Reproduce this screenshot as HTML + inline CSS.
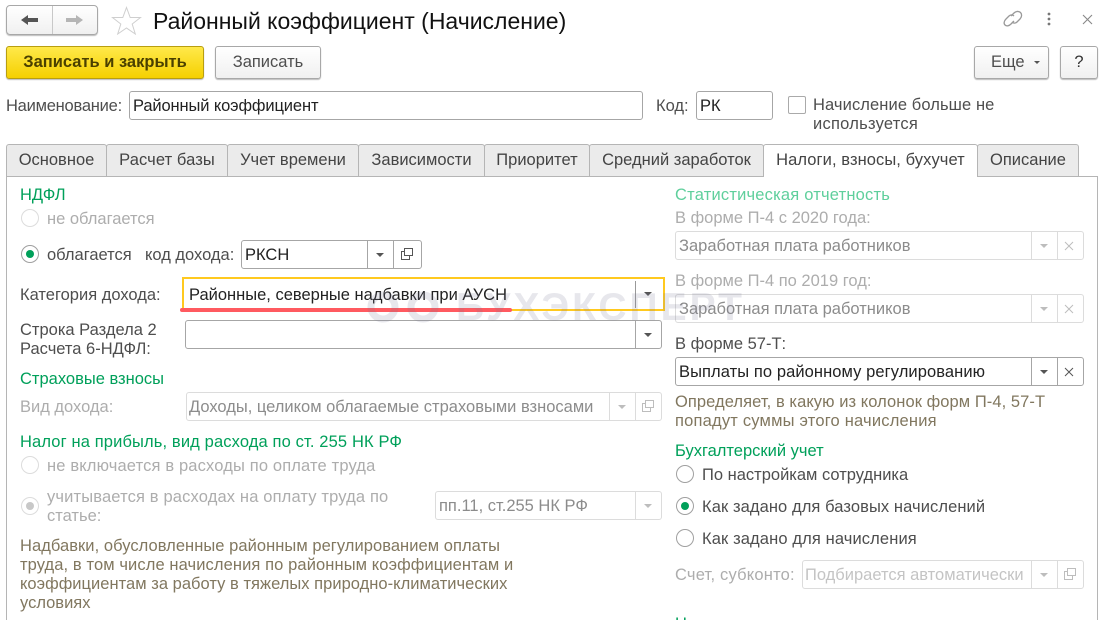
<!DOCTYPE html>
<html><head><meta charset="utf-8"><style>
html,body{margin:0;padding:0;background:#fff}
#p{position:relative;width:1101px;height:620px;overflow:hidden;background:#fff;font-family:"Liberation Sans",sans-serif;font-size:16.5px;color:#4e4e4e}
.t{position:absolute;white-space:nowrap;line-height:20px;margin-top:1px}
.g{color:#00a05a}.lg{color:#5fcf9c}.d{color:#adadad}.k{color:#222}.o{color:#81775f}
.b{position:absolute;box-sizing:border-box;border:1px solid #a8a8a8;border-radius:3px;background:linear-gradient(#fff,#f0f0f0);box-shadow:0 1px 1px #bbb}
.f{position:absolute;box-sizing:border-box;border:1px solid #a6a6a6;border-radius:3px;background:#fff;height:29px}
.f.dis{border-color:#dcdcdc}
.s{position:absolute;top:0;bottom:0;width:1px;background:#a6a6a6}
.dis .s{background:#dcdcdc}
.tr{position:absolute;width:0;height:0;border-left:4px solid transparent;border-right:4px solid transparent;border-top:4px solid #555;top:12px}
.dis .tr{border-top-color:#bdbdbd}
.tab{position:absolute;top:144px;height:32px;box-sizing:border-box;background:#ebebeb;border:1px solid #b5b5b5;border-bottom:none;border-radius:3px 3px 0 0;text-align:center;line-height:30px;color:#444}
.r{position:absolute;width:18px;height:18px;box-sizing:border-box;border:1px solid #a0a0a0;border-radius:50%;background:#fff}
.r.dis{border-color:#dcdcdc}
.r i{position:absolute;left:4px;top:4px;width:8px;height:8px;border-radius:50%;background:#00a05a}
.r.dis i{background:#c8c8c8}
svg{position:absolute}
</style></head><body><div id="p">

<!-- nav -->
<div class="b" style="left:6px;top:5px;width:92px;height:30px;border-radius:4px"></div>
<div style="position:absolute;left:52px;top:6px;width:1px;height:28px;background:#c8c8c8"></div>
<svg style="left:20px;top:13px" width="20" height="14"><path d="M1 7L8 2V5H18V9H8V12Z" fill="#555"/></svg>
<svg style="left:65px;top:13px" width="20" height="14"><path d="M18 7L11 2V5H1V9H11V12Z" fill="#b5b5b5"/></svg>
<svg style="left:111px;top:6px" width="31" height="29"><path d="M15.500 1.500L19.200 11.500H29.500L21.200 18L24.300 28L15.500 22L6.700 28L9.800 18L1.500 11.500H11.800Z" fill="#fff" stroke="#cfcfcf"/></svg>
<div class="t k" style="left:153px;top:7px;font-size:23px;line-height:26px;color:#111">Районный коэффициент (Начисление)</div>

<svg style="left:1002px;top:9px" width="22" height="20" fill="none" stroke="#999" stroke-width="1.300"><path d="M9 7L12 4C14 2 17 2 18.500 3.500C20 5 20 8 18 10L15 13C13.500 14.500 11.500 14.500 10 13"/><path d="M12 12L9 15C7 17 4.500 17.500 3 16C1.500 14.500 2 12 4 10L7 7C8.500 5.500 10.500 5.500 12 7"/></svg>
<svg style="left:1046px;top:11px" width="6" height="16" fill="#777"><circle cx="3" cy="3" r="1.400"/><circle cx="3" cy="8" r="1.400"/><circle cx="3" cy="13" r="1.400"/></svg>
<svg style="left:1082px;top:14px" width="11" height="11" stroke="#888" stroke-width="1.100"><path d="M1 1L10 10M10 1L1 10"/></svg>

<!-- buttons -->
<div class="b" style="left:6px;top:46px;width:198px;height:33px;background:linear-gradient(#ffe94a,#f5d000);border-color:#b89e10;text-align:center;line-height:31px;font-weight:bold;color:#4a4000">Записать и закрыть</div>
<div class="b" style="left:215px;top:46px;width:106px;height:33px;text-align:center;line-height:31px">Записать</div>
<div class="b" style="left:974px;top:46px;width:75px;height:33px;line-height:31px;padding-left:16px">Еще<span style="position:absolute;left:59px;top:14px;width:0;height:0;border-left:3px solid transparent;border-right:3px solid transparent;border-top:3px solid #555"></span></div>
<div class="b" style="left:1060px;top:46px;width:38px;height:33px;text-align:center;line-height:31px;color:#333">?</div>

<!-- name row -->
<div class="t" style="left:6px;top:95px;letter-spacing:-.23px">Наименование:</div>
<div class="f" style="left:129px;top:91px;width:514px"><div class="t k" style="left:3px;top:3px;letter-spacing:-.12px">Районный коэффициент</div></div>
<div class="t" style="left:656px;top:95px">Код:</div>
<div class="f" style="left:696px;top:91px;width:77px"><div class="t k" style="left:3px;top:3px">РК</div></div>
<div style="position:absolute;left:788px;top:96px;width:18px;height:18px;box-sizing:border-box;border:1px solid #aaa;border-radius:2px"></div>
<div class="t" style="left:813px;top:94px;letter-spacing:.1px">Начисление больше не</div>
<div class="t" style="left:813px;top:113px;letter-spacing:.25px">используется</div>

<!-- tabs -->
<div style="position:absolute;left:6px;top:176px;width:1092px;height:460px;box-sizing:border-box;border:1px solid #b5b5b5"></div>
<div class="tab" style="left:6px;width:101px">Основное</div>
<div class="tab" style="left:106px;width:122px;letter-spacing:.1px">Расчет базы</div>
<div class="tab" style="left:227px;width:132px">Учет времени</div>
<div class="tab" style="left:358px;width:127px">Зависимости</div>
<div class="tab" style="left:484px;width:106px">Приоритет</div>
<div class="tab" style="left:589px;width:175px">Средний заработок</div>
<div class="tab" style="left:763px;width:215px;height:33px;background:#fff;letter-spacing:.08px">Налоги, взносы, бухучет</div>
<div class="tab" style="left:977px;width:102px">Описание</div>

<!-- left column -->
<div class="t g" style="left:20px;top:184px">НДФЛ</div>
<div class="r dis" style="left:21px;top:209px"></div>
<div class="t d" style="left:47px;top:208px">не облагается</div>
<div class="r" style="left:21px;top:245px"><i></i></div>
<div class="t" style="left:47px;top:244px">облагается</div>
<div class="t" style="left:145px;top:244px">код дохода:</div>
<div class="f" style="left:241px;top:240px;width:181px"><div class="t k" style="left:3px;top:3px">РКСН</div><div class="s" style="left:125px"></div><div class="tr" style="left:134px"></div><div class="s" style="left:151px"></div>
<svg style="left:158px;top:6px" width="14" height="14" fill="none" stroke="#555"><path d="M4.500 1.500H12.500V8.500H4.500ZM4.500 4.500H1.500V12.500H9.500V8.500"/></svg></div>

<div class="t" style="left:20px;top:284px">Категория дохода:</div>
<div style="position:absolute;left:182px;top:277px;width:483px;height:34px;box-sizing:border-box;border:2px solid #ffc91f"></div>
<div class="t k" style="left:189px;top:284px">Районные, северные надбавки при АУСН</div>
<div style="position:absolute;left:635px;top:281px;width:1px;height:27px;background:#999"></div>
<div style="position:absolute;left:644px;top:292px;width:0;height:0;border-left:4px solid transparent;border-right:4px solid transparent;border-top:4px solid #555"></div>
<div style="position:absolute;left:180px;top:308px;width:332px;height:4px;background:#ff5a60;border-radius:2px"></div>

<div class="t" style="left:20px;top:319px">Строка Раздела 2</div>
<div class="t" style="left:20px;top:338px">Расчета 6-НДФЛ:</div>
<div class="f" style="left:185px;top:320px;width:477px"><div class="s" style="left:449px"></div><div class="tr" style="left:458px"></div></div>

<div class="t g" style="left:20px;top:368px">Страховые взносы</div>
<div class="t d" style="left:20px;top:396px">Вид дохода:</div>
<div class="f dis" style="left:186px;top:392px;width:476px"><div class="t" style="left:2px;top:3px;color:#8c8c8c">Доходы, целиком облагаемые страховыми взносами</div><div class="s" style="left:422px"></div><div class="tr" style="left:431px"></div><div class="s" style="left:448px"></div>
<svg style="left:454px;top:6px" width="14" height="14" fill="none" stroke="#bdbdbd"><path d="M4.500 1.500H12.500V8.500H4.500ZM4.500 4.500H1.500V12.500H9.500V8.500"/></svg></div>

<div class="t g" style="left:20px;top:431px;letter-spacing:.13px">Налог на прибыль, вид расхода по ст. 255 НК РФ</div>
<div class="r dis" style="left:21px;top:456px"></div>
<div class="t d" style="left:47px;top:455px;letter-spacing:.15px">не включается в расходы по оплате труда</div>
<div class="r dis" style="left:21px;top:497px"><i></i></div>
<div class="t d" style="left:47px;top:486px;letter-spacing:.15px">учитывается в расходах на оплату труда по</div>
<div class="t d" style="left:47px;top:505px">статье:</div>
<div class="f dis" style="left:435px;top:491px;width:227px"><div class="t" style="left:3px;top:3px;color:#8c8c8c">пп.11, ст.255 НК РФ</div><div class="s" style="left:199px"></div><div class="tr" style="left:208px"></div></div>

<div class="t o" style="left:20px;top:535px;letter-spacing:.05px">Надбавки, обусловленные районным регулированием оплаты</div>
<div class="t o" style="left:20px;top:554px;letter-spacing:.1px">труда, в том числе начисления по районным коэффициентам и</div>
<div class="t o" style="left:20px;top:573px;letter-spacing:.03px">коэффициентам за работу в тяжелых природно-климатических</div>
<div class="t o" style="left:20px;top:592px">условиях</div>

<!-- right column -->
<div class="t lg" style="left:675px;top:184px;letter-spacing:.2px">Статистическая отчетность</div>
<div class="t d" style="left:675px;top:207px">В форме П-4 с 2020 года:</div>
<div class="f dis" style="left:675px;top:231px;width:409px"><div class="t" style="left:3px;top:3px;color:#8c8c8c">Заработная плата работников</div><div class="s" style="left:355px"></div><div class="tr" style="left:364px"></div><div class="s" style="left:381px"></div><svg style="left:388px;top:9px" width="10" height="10" stroke="#bdbdbd"><path d="M1 1L9 9M9 1L1 9"/></svg></div>
<div class="t d" style="left:675px;top:270px">В форме П-4 по 2019 год:</div>
<div class="f dis" style="left:675px;top:294px;width:409px"><div class="t" style="left:3px;top:3px;color:#8c8c8c">Заработная плата работников</div><div class="s" style="left:355px"></div><div class="tr" style="left:364px"></div><div class="s" style="left:381px"></div><svg style="left:388px;top:9px" width="10" height="10" stroke="#bdbdbd"><path d="M1 1L9 9M9 1L1 9"/></svg></div>
<div class="t" style="left:675px;top:333px">В форме 57-Т:</div>
<div class="f" style="left:675px;top:357px;width:409px"><div class="t k" style="left:3px;top:3px;letter-spacing:.08px">Выплаты по районному регулированию</div><div class="s" style="left:355px"></div><div class="tr" style="left:364px"></div><div class="s" style="left:381px"></div><svg style="left:388px;top:9px" width="10" height="10" stroke="#555"><path d="M1 1L9 9M9 1L1 9"/></svg></div>
<div class="t o" style="left:675px;top:391px;letter-spacing:.07px">Определяет, в какую из колонок форм П-4, 57-Т</div>
<div class="t o" style="left:675px;top:410px;letter-spacing:.2px">попадут суммы этого начисления</div>

<div class="t g" style="left:675px;top:440px">Бухгалтерский учет</div>
<div class="r" style="left:676px;top:465px"></div>
<div class="t" style="left:702px;top:464px">По настройкам сотрудника</div>
<div class="r" style="left:676px;top:497px"><i></i></div>
<div class="t" style="left:702px;top:496px;letter-spacing:.09px">Как задано для базовых начислений</div>
<div class="r" style="left:676px;top:529px"></div>
<div class="t" style="left:702px;top:528px;letter-spacing:.12px">Как задано для начисления</div>
<div class="t d" style="left:675px;top:564px;letter-spacing:.2px">Счет, субконто:</div>
<div class="f dis" style="left:802px;top:560px;width:282px"><div class="t" style="left:2px;top:3px;color:#c4c4c4">Подбирается автоматически</div><div class="s" style="left:228px"></div><div class="tr" style="left:237px"></div><div class="s" style="left:254px"></div>
<svg style="left:260px;top:6px" width="14" height="14" fill="none" stroke="#bdbdbd"><path d="M4.500 1.500H12.500V8.500H4.500ZM4.500 4.500H1.500V12.500H9.500V8.500"/></svg></div>
<div class="t g" style="left:675px;top:613px">Начисление</div>

<!-- watermark -->
<div class="t" style="left:456px;top:285px;font-size:39px;line-height:44px;font-weight:bold;color:rgba(120,120,150,.18);letter-spacing:3px">БУХЭКСПЕРТ</div>
<svg style="left:362px;top:291px" width="84" height="36" fill="none" stroke="rgba(120,120,150,.18)" stroke-width="7"><circle cx="21" cy="16" r="12"/><circle cx="61" cy="16" r="12"/></svg>

</div></body></html>
